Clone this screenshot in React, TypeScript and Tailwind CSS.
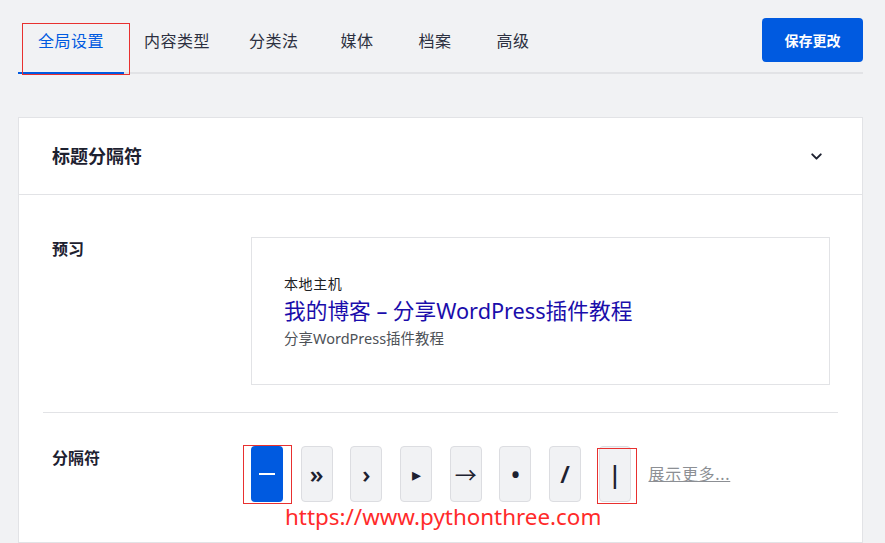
import React from 'react';
import { ChevronDown } from 'lucide-react';

const tabs = ['全局设置', '内容类型', '分类法', '媒体', '档案', '高级'];
const separators = ['»', '›', '▸', '→', '•', '/', '|'];

export default function App() {
  return (
    <div
      className="relative min-h-[543px] bg-[#f1f2f4] pl-[18px] pr-[22px] pt-[18px] text-[#1d2130] overflow-hidden"
      style={{ fontFamily: '"Noto Sans", "Noto Sans CJK SC", sans-serif' }}
    >
      {/* Top tabs + save */}
      <div className="flex items-start justify-between border-b-2 border-[#e2e3e6]">
        <ul className="flex">
          {tabs.map((t, i) => (
            <li
              key={t}
              className={
                i === 0
                  ? 'min-w-[78px] px-5 pt-[11px] pb-[19px] -mb-[2px] border-b-2 border-[#005ae0] text-center text-[16px] leading-6 tracking-[0.5px] text-[#005ae0]'
                  : 'min-w-[78px] pl-5 pr-[19px] pt-[11px] pb-[19px] text-center text-[16px] leading-6 tracking-[0.5px] text-[#2c3040]'
              }
            >
              {t}
            </li>
          ))}
        </ul>
        <button className="h-[44px] w-[101px] rounded-[4px] bg-[#005ae0] text-[14px] font-bold text-white">
          保存更改
        </button>
      </div>

      {/* Card */}
      <div className="mt-[43px] border border-[#e2e3e6] bg-white">
        <div className="flex h-[77px] items-center justify-between border-b border-[#e2e3e6] pl-[33px] pr-[37px]">
          <h2 className="text-[18px] font-bold leading-7">标题分隔符</h2>
          <ChevronDown size={17} strokeWidth={2.8} className="text-[#1d2130]" />
        </div>

        <div className="px-[24px] pt-[42px]">
          <div className="flex px-[9px]">
            <div className="w-[199px] text-[16px] font-bold leading-6">预习</div>
            <div className="flex h-[148px] flex-1 flex-col justify-center border border-[#e2e3e6] pl-[32px] mr-[-1px]">
              <div className="text-[14px] leading-[20px] tracking-[0.6px] text-[#202124]">本地主机</div>
              <div className="mt-[3px] text-[21.7px] leading-[28px] text-[#1a0dab]">我的博客 – 分享WordPress插件教程</div>
              <div className="mt-[3px] text-[14.5px] leading-[20px] text-[#4d5156]">分享WordPress插件教程</div>
            </div>
          </div>

          <div className="mt-[27px] border-t border-[#e2e3e6]" />

          <div className="flex px-[9px] pt-[33px] pb-[40px]">
            <div className="w-[199px] text-[16px] font-bold leading-6">分隔符</div>
            <div className="flex items-center gap-[17.7px]">
              <div className="flex h-[56px] w-[32px] items-center justify-center rounded-[4px] bg-[#005ae0]">
                <span className="block h-[2px] w-[16px] bg-white" />
              </div>
              {separators.map((s) => (
                <div
                  key={s}
                  className={
                    s === '▸'
                      ? 'flex h-[56px] w-[32px] items-center justify-center rounded-[4px] border border-[#dcdde1] bg-[#f1f2f4] text-[18px] text-[#1d2130]'
                      : s === '→'
                        ? 'flex h-[56px] w-[32px] items-center justify-center rounded-[4px] border border-[#dcdde1] bg-[#f1f2f4] text-[22px] text-[#1d2130]'
                        : 'flex h-[56px] w-[32px] items-center justify-center rounded-[4px] border border-[#dcdde1] bg-[#f1f2f4] text-[24px] font-semibold text-[#1d2130]'
                  }
                >
                  {s}
                </div>
              ))}
              <span className="text-[16px] tracking-[0.7px] text-[#8c8f94] underline">展示更多...</span>
            </div>
          </div>
        </div>
      </div>

      {/* Annotation overlays */}
      <div className="absolute left-[22px] top-[23px] h-[52px] w-[108px] border border-[#e8302f]" />
      <div className="absolute left-[243px] top-[445px] h-[59px] w-[49px] border border-[#e8302f]" />
      <div className="absolute left-[597px] top-[448px] h-[56px] w-[40px] border border-[#e8302f]" />
      <div
        className="absolute left-[285px] top-[503px] text-[22.4px] leading-7 text-[#ff2a2a]"
        style={{ fontFamily: '"Noto Sans", sans-serif' }}
      >
        https://www.pythonthree.com
      </div>
    </div>
  );
}
